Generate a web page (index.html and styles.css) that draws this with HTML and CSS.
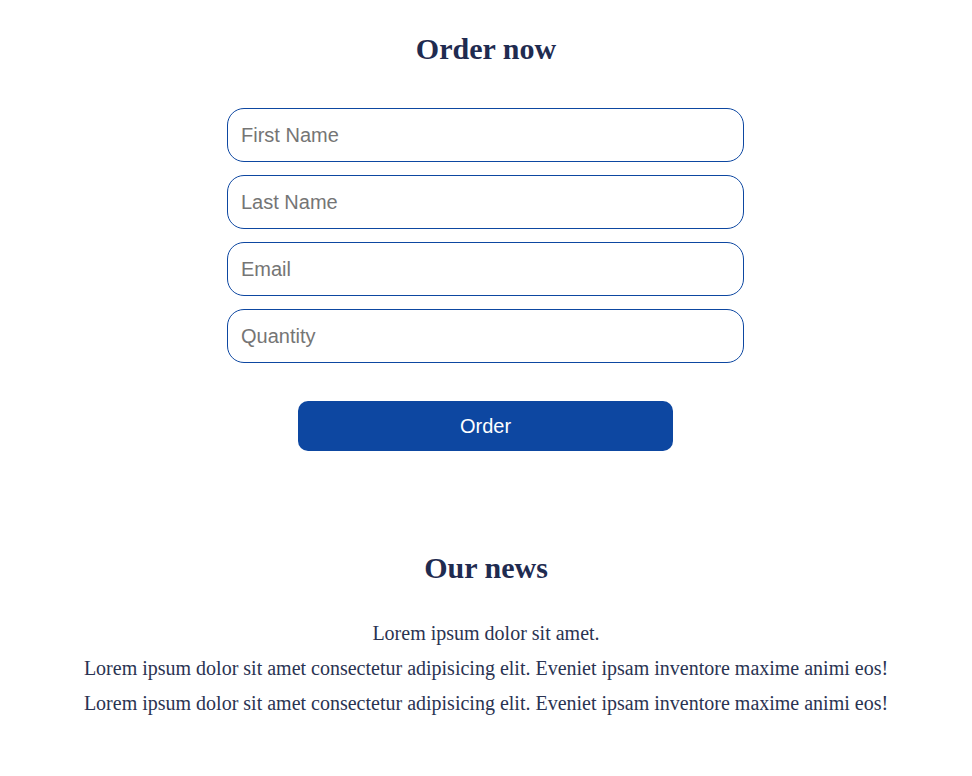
FILE: index.html
```html
<!DOCTYPE html>
<html lang="en">
<head>
<meta charset="utf-8">
<title>Order now</title>
<link rel="stylesheet" href="styles.css">
</head>
<body>
<section class="order">
  <h2 class="title">Order now</h2>
  <form class="form">
    <input class="field" type="text" placeholder="First Name">
    <input class="field" type="text" placeholder="Last Name">
    <input class="field" type="email" placeholder="Email">
    <input class="field" type="number" placeholder="Quantity">
    <button class="btn" type="button">Order</button>
  </form>
</section>
<section class="news">
  <h2 class="title">Our news</h2>
  <p class="text">Lorem ipsum dolor sit amet.</p>
  <p class="text">Lorem ipsum dolor sit amet consectetur adipisicing elit. Eveniet ipsam inventore maxime animi eos!</p>
  <p class="text">Lorem ipsum dolor sit amet consectetur adipisicing elit. Eveniet ipsam inventore maxime animi eos!</p>
</section>
</body>
</html>
```
FILE: styles.css
```css
body {
  margin: 0;
  font-family: "Liberation Serif", "Times New Roman", serif;
  color: #27304f;
  background: #fff;
}
.order {
  padding-top: 30px;
  display: flex;
  flex-direction: column;
  align-items: center;
}
.title {
  margin: 0;
  font-size: 30px;
  font-weight: bold;
  color: #1f2b50;
  text-align: center;
  line-height: 38px;
}
.form {
  margin-top: 40px;
  margin-right: 1px;
  width: 517px;
  display: flex;
  flex-direction: column;
  align-items: center;
  gap: 13px;
}
.field {
  box-sizing: border-box;
  width: 100%;
  height: 54px;
  border: 1px solid #0d47a1;
  border-radius: 17px;
  padding: 0 13px;
  font-family: "Liberation Sans", Arial, sans-serif;
  font-size: 20px;
  color: #333;
  background: #fff;
  outline: none;
}
.field::placeholder {
  color: #757575;
}
.field::-webkit-outer-spin-button,
.field::-webkit-inner-spin-button {
  -webkit-appearance: none;
  margin: 0;
}
.btn {
  margin-top: 25px;
  width: 375px;
  height: 50px;
  border: none;
  border-radius: 10px;
  background: #0d47a1;
  color: #fff;
  font-family: "Liberation Sans", Arial, sans-serif;
  font-size: 20px;
  cursor: pointer;
}
.news {
  margin-top: 98px;
  text-align: center;
}
.text {
  margin: 0;
  font-size: 20px;
  line-height: 35px;
  color: #2a3352;
}
.news .title {
  margin-bottom: 29px;
}
```
